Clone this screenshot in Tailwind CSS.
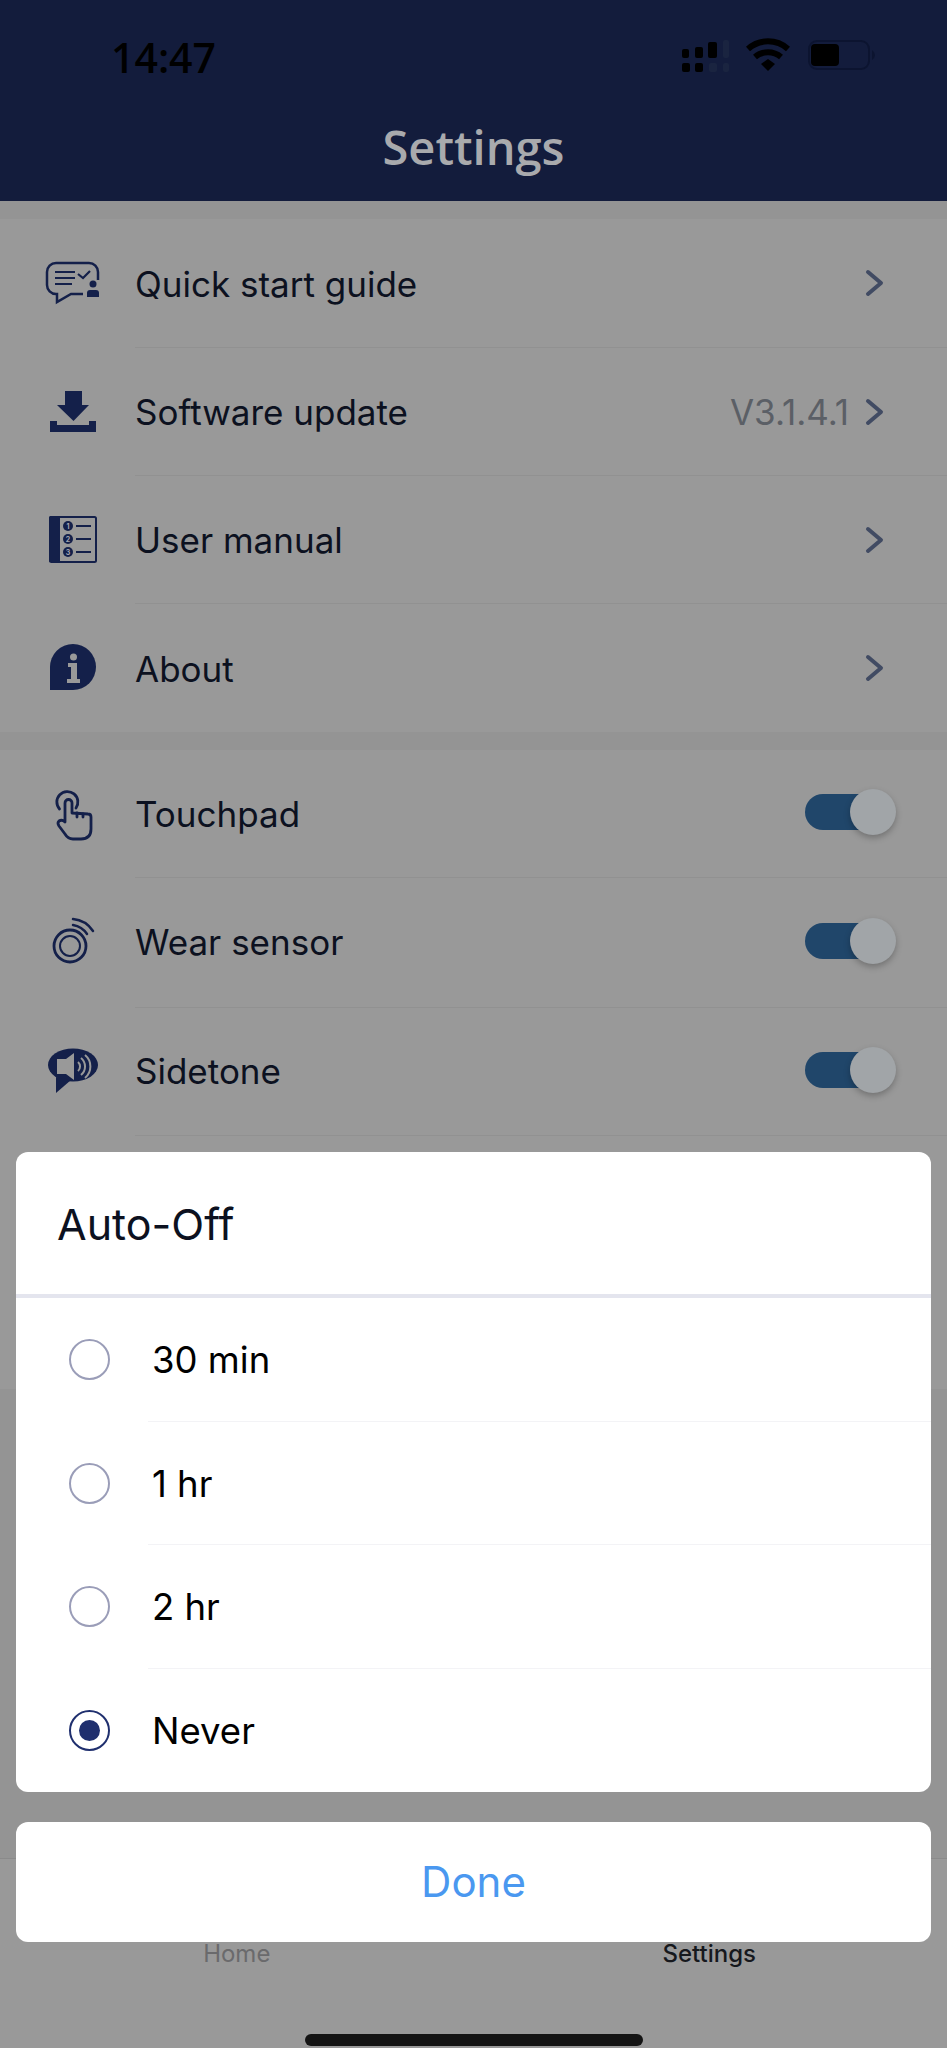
<!doctype html>
<html lang="en">
<head>
<meta charset="utf-8">
<title>Settings</title>
<script src="https://cdn.jsdelivr.net/npm/@tailwindcss/browser@4"></script>
</head>
<body class="m-0">
<div class="relative flex flex-col w-[947px] h-[2048px] overflow-hidden bg-[#949494] font-['Inter','Liberation_Sans',sans-serif] text-[#0c1120]">

  <header class="h-[201px] shrink-0 flex flex-col bg-[#131c3c]">
    <div class="flex items-center justify-between h-[122px] pb-[8px] pl-[111px] pr-[67px]">
      <span class="font-['Open_Sans',sans-serif] font-semibold text-[41px] leading-none text-black">14:47</span>
      <svg class="w-[200px] h-[40px]" viewBox="680 37 200 40" aria-hidden="true">
        <g fill="#000"><rect x="682" y="49" width="7" height="9" rx="2"/><rect x="695" y="47" width="8" height="11" rx="2"/><rect x="708" y="42" width="9" height="16" rx="2"/>
        <rect x="682" y="63" width="8" height="9" rx="2"/><rect x="695" y="63" width="8" height="9" rx="2"/></g>
        <g fill="#1a2440"><rect x="723" y="40" width="6" height="18" rx="2"/><rect x="709" y="63" width="8" height="9" rx="2"/><rect x="723" y="63" width="6" height="9" rx="2"/></g>
        <path d="M748 49 A30 30 0 0 1 788 49" fill="none" stroke="#000" stroke-width="6"/>
        <path d="M755 57 A20 20 0 0 1 781 57" fill="none" stroke="#000" stroke-width="6"/>
        <path d="M761 64 L768 59 L775 64 L768 71 Z" fill="#000"/>
        <rect x="809" y="41" width="60" height="28" rx="8" fill="none" stroke="#0c1430" stroke-width="2"/>
        <rect x="811" y="44" width="28" height="22" rx="4" fill="#000"/>
        <path d="M872 50 q3 2 3 5 q0 3 -3 5 Z" fill="#0c1430"/>
      </svg>
    </div>
    <h1 class="text-center font-['Open_Sans',sans-serif] font-semibold text-[47px] leading-[50px] text-[#a9aaad]">Settings</h1>
  </header>

  <div class="h-[18px] shrink-0"></div>

  <section class="shrink-0 bg-[#999999]">
    <div class="flex items-center h-[128px] pl-[44px] pr-[62px]">
      <svg class="w-[60px] h-[60px] shrink-0" viewBox="44 254 60 60" aria-hidden="true">
        <path d="M98 281 V273 a9 9 0 0 0 -9 -9 H56 a9 9 0 0 0 -9 9 V286 a9 9 0 0 0 9 9 h1 V303 L71 295 H83" fill="none" stroke="#14204a" stroke-width="2.5"/>
        <path d="M55 273 H75 M55 279 H75 M55 285 H72" stroke="#14204a" stroke-width="2.2"/>
        <path d="M78 275 L83 279 L90 272" fill="none" stroke="#14204a" stroke-width="2.2"/>
        <circle cx="93" cy="285" r="3.5" fill="#14204a"/><path d="M87 298 V294 q0 -3 3 -3 h6 q3 0 3 3 V298 Z" fill="#14204a"/>
      </svg>
      <div class="ml-[31px] flex-1 pt-[2px] text-[35px]">Quick start guide</div>
      <svg class="w-[20px] h-[28px] shrink-0" viewBox="0 0 20 28" aria-hidden="true"><path d="M3 3 L16 14 L3 25" fill="none" stroke="#414b63" stroke-width="4" stroke-linecap="round" stroke-linejoin="round"/></svg>
    </div>
    <div class="h-px ml-[135px] bg-[#919191]"></div>
    <div class="flex items-center h-[127px] pl-[44px] pr-[62px]">
      <svg class="w-[60px] h-[60px] shrink-0" viewBox="44 382 60 60" aria-hidden="true">
        <path d="M65 391 H82 V405 H89 L73.500 421 L57 405 H65 Z" fill="#14204a"/>
        <path d="M50 421 H57 V425 H89 V421 H96 V432 H50 Z" fill="#14204a"/>
      </svg>
      <div class="ml-[31px] flex-1 pt-[2px] text-[35px]">Software update</div>
      <span class="mr-[16px] pt-[2px] text-[35px] text-[#5b5f66]">V3.1.4.1</span>
      <svg class="w-[20px] h-[28px] shrink-0" viewBox="0 0 20 28" aria-hidden="true"><path d="M3 3 L16 14 L3 25" fill="none" stroke="#414b63" stroke-width="4" stroke-linecap="round" stroke-linejoin="round"/></svg>
    </div>
    <div class="h-px ml-[135px] bg-[#919191]"></div>
    <div class="flex items-center h-[127px] pl-[44px] pr-[62px]">
      <svg class="w-[60px] h-[60px] shrink-0" viewBox="44 510 60 60" aria-hidden="true">
        <rect x="50" y="517" width="46" height="45" rx="1.500" fill="none" stroke="#14204a" stroke-width="2"/>
        <rect x="49" y="516" width="11" height="46" rx="1.500" fill="#14204a"/>
        <g fill="#14204a"><circle cx="68" cy="526" r="5"/><circle cx="68" cy="539" r="5"/><circle cx="68" cy="552" r="5"/></g>
        <path d="M76 526 H91 M76 539 H91 M76 552 H91" stroke="#14204a" stroke-width="2"/>
        <g fill="#a4a7b2" font-size="7" font-weight="700" text-anchor="middle" font-family="Inter, sans-serif"><text x="68" y="529">1</text><text x="68" y="542">2</text><text x="68" y="555">3</text></g>
      </svg>
      <div class="ml-[31px] flex-1 pt-[2px] text-[35px]">User manual</div>
      <svg class="w-[20px] h-[28px] shrink-0" viewBox="0 0 20 28" aria-hidden="true"><path d="M3 3 L16 14 L3 25" fill="none" stroke="#414b63" stroke-width="4" stroke-linecap="round" stroke-linejoin="round"/></svg>
    </div>
    <div class="h-px ml-[135px] bg-[#919191]"></div>
    <div class="flex items-center h-[128px] pl-[44px] pr-[62px]">
      <svg class="w-[60px] h-[60px] shrink-0" viewBox="44 638 60 60" aria-hidden="true">
        <path d="M50 690 V667 A23 23 0 1 1 73 690 Z" fill="#14204a"/>
        <circle cx="73.500" cy="657" r="3.500" fill="#999"/>
        <path d="M68 663 H77 V679 H80 V683 H67 V679 H71 V667 H68 Z" fill="#999"/>
      </svg>
      <div class="ml-[31px] flex-1 pt-[2px] text-[35px]">About</div>
      <svg class="w-[20px] h-[28px] shrink-0" viewBox="0 0 20 28" aria-hidden="true"><path d="M3 3 L16 14 L3 25" fill="none" stroke="#414b63" stroke-width="4" stroke-linecap="round" stroke-linejoin="round"/></svg>
    </div>
  </section>

  <div class="h-[18px] shrink-0"></div>

  <section class="shrink-0 h-[639px] bg-[#999999]">
    <div class="flex items-center h-[127px] pl-[44px] pr-[55px]">
      <svg class="w-[60px] h-[60px] shrink-0" viewBox="44 782 60 60" aria-hidden="true">
        <g fill="none" stroke="#14204a" stroke-width="2.800" stroke-linecap="round" stroke-linejoin="round">
          <path d="M59.500 807 A10.500 10.500 0 1 1 76 806"/>
          <path d="M65 820 V801 a3.500 3.500 0 0 1 7 0 V811 L88 812 q3 0 3 3 V827 q0 10 -10 10 H73 q-5 0 -8 -5 L59 824 q-2 -3 0 -5 q3 -2 6 1"/>
          <path d="M77 811 V815 M83 812 V815"/>
        </g>
      </svg>
      <div class="ml-[31px] flex-1 pt-[2px] text-[35px]">Touchpad</div>
      <div class="relative w-[87px] h-[36px] -mt-[3px] rounded-full bg-[#20466a]"><div class="absolute -right-[4px] -top-[5px] w-[46px] h-[46px] rounded-full bg-[#a1a5a8] shadow-[0_3px_6px_rgba(0,0,0,0.25)]"></div></div>
    </div>
    <div class="h-px ml-[135px] bg-[#919191]"></div>
    <div class="flex items-center h-[129px] pl-[44px] pr-[55px]">
      <svg class="w-[60px] h-[60px] shrink-0" viewBox="44 913 60 60" aria-hidden="true">
        <g fill="none" stroke="#14204a">
          <circle cx="70" cy="946" r="16" stroke-width="2.800"/><circle cx="70" cy="946" r="10" stroke-width="2"/>
          <path d="M73 925 A21 21 0 0 1 87 934" stroke-width="2.500" stroke-linecap="round"/>
          <path d="M73 919 A27 27 0 0 1 93 931" stroke-width="2.500" stroke-linecap="round"/>
        </g>
      </svg>
      <div class="ml-[31px] flex-1 text-[35px]">Wear sensor</div>
      <div class="relative w-[87px] h-[36px] -mt-[3px] rounded-full bg-[#20466a]"><div class="absolute -right-[4px] -top-[5px] w-[46px] h-[46px] rounded-full bg-[#a1a5a8] shadow-[0_3px_6px_rgba(0,0,0,0.25)]"></div></div>
    </div>
    <div class="h-px ml-[135px] bg-[#919191]"></div>
    <div class="flex items-center h-[127px] pl-[44px] pr-[55px]">
      <svg class="w-[60px] h-[60px] shrink-0" viewBox="44 1041 60 60" aria-hidden="true">
        <ellipse cx="73" cy="1064" rx="25" ry="16.500" fill="#14204a"/>
        <path d="M56 1076 V1092 L71 1079 Z" fill="#14204a"/>
        <path d="M57 1058 H66 L74 1052 V1079 L66 1073 H57 Z" fill="#999"/>
        <g fill="none" stroke="#999" stroke-width="2"><path d="M78 1061 A6 6 0 0 1 78 1070"/><path d="M81 1057 A11 11 0 0 1 81 1074"/><path d="M85 1054 A15 15 0 0 1 85 1077"/></g>
      </svg>
      <div class="ml-[31px] flex-1 text-[35px]">Sidetone</div>
      <div class="relative w-[87px] h-[36px] -mt-[3px] rounded-full bg-[#20466a]"><div class="absolute -right-[4px] -top-[5px] w-[46px] h-[46px] rounded-full bg-[#a1a5a8] shadow-[0_3px_6px_rgba(0,0,0,0.25)]"></div></div>
    </div>
    <div class="h-px ml-[135px] bg-[#919191]"></div>
  </section>

  <div class="flex-1"></div>

  <nav class="shrink-0 h-[190px] flex flex-col items-center bg-[#999999] border-t border-[#8a8a8a]">
    <div class="grid grid-cols-2 w-full text-center mt-[81px] text-[24px] leading-[28px]">
      <span class="text-[#6a6a6c]">Home</span>
      <span class="font-medium text-[#16181d] -ml-[2px]">Settings</span>
    </div>
    <div class="mt-[66px] w-[338px] h-[12px] rounded-full bg-[#141414]"></div>
  </nav>

  <div class="absolute left-[16px] right-[16px] top-[1152px] flex flex-col gap-[30px]">
    <div class="flex flex-col h-[640px] rounded-[12px] bg-white overflow-hidden">
      <div class="flex items-center h-[142px] pl-[41px] pt-[2px] text-[43px]">Auto-Off</div>
      <div class="h-[4px] bg-[#e4e5ee]"></div>
      <div class="flex items-center h-[123.5px] pl-[53px] text-[36.5px] text-black">
        <span class="w-[41px] h-[41px] rounded-full border-[2.5px] border-[#9a9db8] shrink-0"></span>
        <span class="ml-[42px] pt-[2px]">30 min</span>
      </div>
      <div class="h-px ml-[132px] bg-[#f3f3f6]"></div>
      <div class="flex items-center h-[122.500px] pl-[53px] text-[36.5px] text-black">
        <span class="w-[41px] h-[41px] rounded-full border-[2.5px] border-[#9a9db8] shrink-0"></span>
        <span class="ml-[42px] pt-[2px]">1 hr</span>
      </div>
      <div class="h-px ml-[132px] bg-[#f3f3f6]"></div>
      <div class="flex items-center h-[122.500px] pl-[53px] text-[36.5px] text-black">
        <span class="w-[41px] h-[41px] rounded-full border-[2.5px] border-[#9a9db8] shrink-0"></span>
        <span class="ml-[42px] pt-[2px]">2 hr</span>
      </div>
      <div class="h-px ml-[132px] bg-[#f3f3f6]"></div>
      <div class="flex items-center h-[123.5px] pl-[53px] text-[36.5px] text-black">
        <span class="flex items-center justify-center w-[41px] h-[41px] rounded-full border-[2.5px] border-[#1f2f6e] shrink-0"><span class="w-[21px] h-[21px] rounded-full bg-[#1f2f6e]"></span></span>
        <span class="ml-[42px] pt-[2px]">Never</span>
      </div>
    </div>
    <div class="flex items-center justify-center h-[120px] -mt-[0px] rounded-[12px] bg-white text-[42px] text-[#4a98f0]"><span class="-mt-[2px]">Done</span></div>
  </div>
</div>
</body>
</html>
